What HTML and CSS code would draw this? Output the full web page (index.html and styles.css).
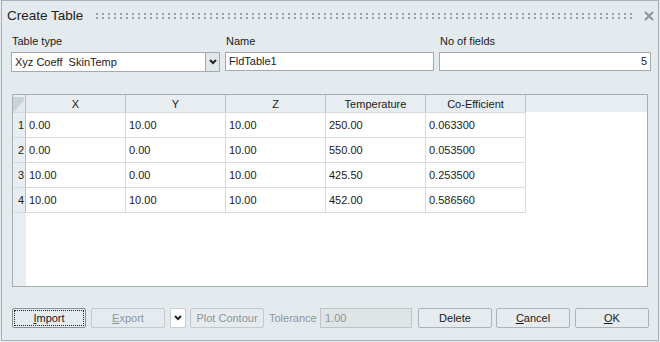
FILE: index.html
```html
<!DOCTYPE html>
<html lang="en">
<head>
    <meta charset="UTF-8">
    <title>Create Table</title>
    <link rel="stylesheet" href="styles.css">
</head>
<body>
    <div class="dialog">
        <div class="titlebar">
            <span class="title">Create Table</span>
            <span class="grip"></span>
            <svg class="close" width="10" height="10" viewBox="0 0 10 10">
                <path d="M1 1 L9 9 M9 1 L1 9" stroke="#8c9599" stroke-width="2"/>
            </svg>
        </div>

        <div class="fields">
            <div class="field">
                <label>Table type</label>
                <div class="combo">
                    <div class="combo-value">Xyz Coeff&nbsp; SkinTemp</div>
                    <div class="combo-btn">
                        <svg width="8" height="6" viewBox="0 0 8 6"><path d="M1 1 L4 4 L7 1" stroke="#222" stroke-width="2" fill="none"/></svg>
                    </div>
                </div>
            </div>
            <div class="field">
                <label>Name</label>
                <div class="input">FldTable1</div>
            </div>
            <div class="field">
                <label>No of fields</label>
                <div class="input right">5</div>
            </div>
        </div>

        <div class="grid">
            <table>
                <colgroup>
                    <col class="c-num">
                    <col class="c-data"><col class="c-data"><col class="c-data"><col class="c-data"><col class="c-data">
                </colgroup>
                <thead>
                    <tr>
                        <th class="corner">
                            <svg width="11" height="15" viewBox="0 0 11 15">
                                <rect width="11" height="15" fill="#c9d3da"/>
                                <polygon points="11,3 11,15 1,15" fill="#e2e9ed"/>
                            </svg>
                        </th>
                        <th>X</th><th>Y</th><th>Z</th><th>Temperature</th><th>Co-Efficient</th>
                    </tr>
                </thead>
                <tbody>
                    <tr><td class="num">1</td><td>0.00</td><td>10.00</td><td>10.00</td><td>250.00</td><td>0.063300</td></tr>
                    <tr><td class="num">2</td><td>0.00</td><td>0.00</td><td>10.00</td><td>550.00</td><td>0.053500</td></tr>
                    <tr><td class="num">3</td><td>10.00</td><td>0.00</td><td>10.00</td><td>425.50</td><td>0.253500</td></tr>
                    <tr><td class="num">4</td><td>10.00</td><td>10.00</td><td>10.00</td><td>452.00</td><td>0.586560</td></tr>
                </tbody>
            </table>
        </div>

        <div class="actions">
            <button class="btn focus"><u>I</u>mport</button>
            <button class="btn" disabled><u>E</u>xport</button>
            <button class="drop">
                <svg width="8" height="6" viewBox="0 0 8 6"><path d="M1 1 L4 4 L7 1" stroke="#222" stroke-width="2" fill="none"/></svg>
            </button>
            <button class="btn plot" disabled>Plot Contour</button>
            <span class="tol-label">Tolerance</span>
            <div class="tol-input">1.00</div>
            <button class="btn delete">Delete</button>
            <button class="btn cancel"><u>C</u>ancel</button>
            <button class="btn"><u>O</u>K</button>
        </div>
    </div>
</body>
</html>
```

FILE: styles.css
```css
body {
    margin: 0;
    background: #e4ebef;
    font-family: "Liberation Sans", Arial, sans-serif;
    font-size: 11px;
    color: #1b1b1b;
}
.dialog {
    margin-left: 1px;
    width: 658px;
    height: 341px;
    box-sizing: border-box;
    border: 1px solid #a9b0b4;
    background: #e4ebef;
    display: flex;
    flex-direction: column;
}
.titlebar {
    height: 28px;
    display: flex;
    align-items: center;
    padding-left: 5px;
    padding-right: 4px;
}
.title {
    font-size: 13.5px;
    color: #222;
    margin-top: 1px;
}
.grip {
    flex: 1;
    height: 6px;
    margin: 1px 10px 0 13px;
    background:
        linear-gradient(to bottom, transparent 2px, #e4ebef 2px) 0 0 / 6px 4px,
        linear-gradient(90deg, #9aa2a6 2px, transparent 2px) 0 0 / 6px 4px;
}
.close {
    margin-top: 1px;
}
.fields {
    display: grid;
    grid-template-columns: 209px 209px 212px;
    gap: 5px;
    padding: 5px 0 0 9px;
}
.field label {
    display: block;
    line-height: 14px;
    margin-bottom: 4px;
    padding-left: 1px;
}
.combo {
    display: flex;
    height: 20px;
}
.combo-value {
    flex: 1;
    background: #fff;
    border: 1px solid #a3a9ad;
    padding-left: 3px;
    line-height: 18px;
}
.combo-btn {
    width: 14px;
    box-sizing: border-box;
    border: 1px solid #a3a9ad;
    border-left: none;
    background: #e1e7ea;
    display: flex;
    align-items: center;
    justify-content: center;
}
.input {
    height: 19px;
    box-sizing: border-box;
    background: #fff;
    border: 1px solid #a3a9ad;
    padding: 0 3px;
    line-height: 17px;
}
.input.right {
    text-align: right;
}
.grid {
    margin: 22px 0 0 10px;
    width: 636px;
    height: 193px;
    box-sizing: border-box;
    border: 1px solid #a7aeb2;
    background:
        linear-gradient(#e7edf0, #e7edf0) 0 0 / 100% 17px no-repeat,
        linear-gradient(#e7edf0, #e7edf0) 0 0 / 13px 100% no-repeat,
        #fff;
}
table {
    border-collapse: separate;
    border-spacing: 0;
    table-layout: fixed;
    width: 513px;
}
.c-num {
    width: 13px;
}
.c-data {
    width: 100px;
}
th, td {
    box-sizing: border-box;
    padding: 0;
    font-weight: normal;
    white-space: nowrap;
    overflow: hidden;
}
th {
    height: 17px;
    background: #e7edf0;
    border-right: 1px solid #bcc3c7;
    text-align: center;
    line-height: 16px;
}
th.corner {
    padding: 1px 0 0 0;
    line-height: 0;
    text-align: left;
    border-right-color: #b8bfc3;
}
td {
    height: 25px;
    border-right: 1px solid #d7dbde;
    border-bottom: 1px solid #d7dbde;
    padding-left: 3px;
}
tbody tr:first-child td {
    border-top: 1px solid #d7dbde;
    height: 26px;
}
td.num {
    background: #e7edf0;
    border-right-color: #b8bfc3;
    text-align: right;
    padding: 0 1px 0 0;
}
.actions {
    display: flex;
    align-items: center;
    gap: 5px;
    margin: 21px 0 0 10px;
}
.btn {
    width: 74px;
    height: 20px;
    box-sizing: border-box;
    background: #e5ebee;
    border: 1px solid #adb3b7;
    border-radius: 2px;
    font-family: inherit;
    font-size: 11px;
    color: #1b1b1b;
    padding: 0;
}
.btn:disabled {
    color: #8e959a;
    border-color: #c3c9cc;
}
.btn.focus {
    border-color: #8a9195;
    outline: 1px dotted #222;
    outline-offset: -3px;
}
.drop {
    width: 16px;
    height: 20px;
    box-sizing: border-box;
    background: #fff;
    border: 1px solid #c9ced1;
    border-radius: 1px;
    padding: 0;
    display: flex;
    align-items: center;
    justify-content: center;
}
.plot {
    margin-left: -1px;
}
.tol-label {
    width: 46px;
    white-space: nowrap;
    color: #8e959a;
}
.tol-input {
    width: 92px;
    height: 20px;
    box-sizing: border-box;
    background: #dfe4e7;
    border: 1px solid #bfc5c8;
    color: #8e959a;
    padding-left: 4px;
    line-height: 18px;
}
.delete {
    margin-left: 1px;
}
.cancel {
    margin-left: -1px;
}
```
